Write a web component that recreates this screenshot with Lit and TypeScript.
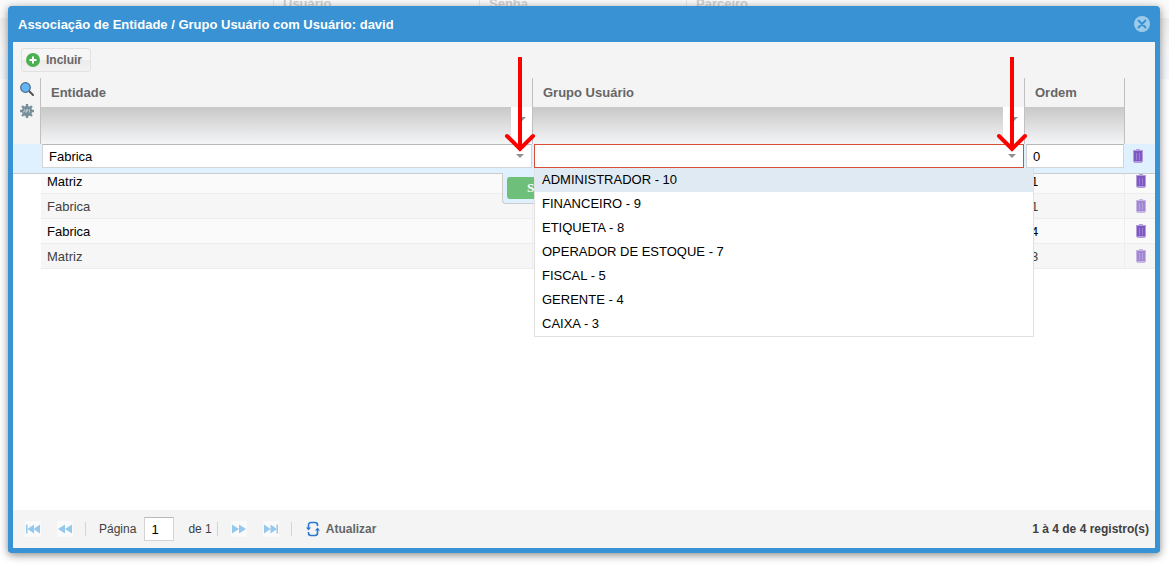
import { LitElement, html, svg, css } from "lit";
import { customElement, property, state } from "lit/decorators.js";
import { classMap } from "lit/directives/class-map.js";

interface Row {
  entity: string;
  group: string;
  order: number;
}

const ROWS: Row[] = [
  { entity: "Matriz", group: "", order: 1 },
  { entity: "Fabrica", group: "", order: 1 },
  { entity: "Fabrica", group: "", order: 4 },
  { entity: "Matriz", group: "", order: 3 },
];

const GROUPS = [
  "ADMINISTRADOR - 10",
  "FINANCEIRO - 9",
  "ETIQUETA - 8",
  "OPERADOR DE ESTOQUE - 7",
  "FISCAL - 5",
  "GERENTE - 4",
  "CAIXA - 3",
];

const trashIcon = html`<svg width="10" height="14" viewBox="0 0 10 14" aria-hidden="true">
  <path d="M3 0h4v1h3v2H0V1h3z" fill="#b39ddb" />
  <path d="M0 3h10v10H0z" fill="#b39ddb" />
  <path d="M1 2h8v10H1z" fill="#7e57c2" />
  <path d="M3.500 4v7M6.500 4v7" stroke="#9c7fd2" />
  <path d="M1 13h8v1H1z" fill="#b39ddb" />
</svg>`;

const caret = html`<svg class="caret" width="8" height="4" viewBox="0 0 8 4" aria-hidden="true">
  <path d="M0 0h8L4 4z" fill="#919191" />
</svg>`;

const arrow = html`<svg class="arrow" width="32" height="96" viewBox="0 0 32 96" aria-hidden="true">
  <path d="M16 1v92" stroke="#f00" stroke-width="4" fill="none" />
  <path d="M3 80l13 13 13-13" stroke="#f00" stroke-width="4" stroke-linecap="round" fill="none" />
</svg>`;

const pagerPaths: Record<string, unknown> = {
  first: svg`<path d="M1 3.500h1.500v9H1zM9 3.500v9L2.500 8zM15 3.500v9L8.500 8z" />`,
  prev: svg`<path d="M8 3.500v9L1 8zM15 3.500v9L8 8z" />`,
  next: svg`<path d="M1 3.500v9L8 8zM8 3.500v9L15 8z" />`,
  last: svg`<path d="M1 3.500v9L7.500 8zM7.500 3.500v9L14 8zM13.500 3.500H15v9h-1.500z" />`,
};

@customElement("grid-pager")
class GridPager extends LitElement {
  @property({ type: Number }) page = 1;
  @property({ type: Number }) pages = 1;
  @property({ type: Number }) total = 0;

  static styles = css`
    :host {
      display: flex;
      align-items: center;
      height: 38px;
      padding: 0 6px 0 12px;
      background: #f4f4f4;
      font-size: 12px;
      color: #404040;
    }
    button {
      display: flex;
      align-items: center;
      border: 0;
      padding: 0;
      background: none;
      font: inherit;
    }
    .nav {
      width: 16px;
      height: 16px;
      margin-right: 16px;
      background: #fafafa;
      fill: #94c8ec;
    }
    .near {
      margin-right: 12px;
    }
    .line {
      width: 1px;
      height: 14px;
      background: #d4d4d4;
    }
    label {
      margin: 0 8px 0 13px;
    }
    input {
      box-sizing: border-box;
      width: 30px;
      height: 24px;
      padding: 0 6px;
      border: 1px solid #d4d4d4;
      border-top-color: #b8b8b8;
      font: 13px "Liberation Sans", Arial, sans-serif;
      color: #000;
    }
    .of {
      margin: 0 5px 0 14px;
    }
    .gap {
      margin-right: 13px;
    }
    .refresh {
      gap: 6px;
      margin-left: 14px;
      font-weight: bold;
      color: #666;
    }
    .summary {
      margin-left: auto;
      font-weight: bold;
    }
  `;

  private nav(kind: string, label: string, near: boolean) {
    return html`<button class=${classMap({ nav: true, near })} aria-label=${label}>
      <svg width="16" height="16" viewBox="0 0 16 16" aria-hidden="true">${pagerPaths[kind]}</svg>
    </button>`;
  }

  render() {
    return html`
      ${this.nav("first", "Primeira página", false)} ${this.nav("prev", "Página anterior", true)}
      <span class="line"></span>
      <label for="page">Página</label>
      <input id="page" .value=${String(this.page)} />
      <span class="of">de ${this.pages}</span>
      <span class="line gap"></span>
      ${this.nav("next", "Próxima página", false)} ${this.nav("last", "Última página", true)}
      <span class="line"></span>
      <button class="refresh">
        <svg width="14" height="16" viewBox="0 0 14 16" fill="none" stroke="#2b78cc" stroke-width="1.600" aria-hidden="true">
          <path d="M2.500 7.500V4a2.500 2.500 0 0 1 2.500-2.500h4A2.500 2.500 0 0 1 11.500 4v1" />
          <path d="M11.500 8.500V12A2.500 2.500 0 0 1 9 14.500H5A2.500 2.500 0 0 1 2.500 12v-1" />
          <path d="M0 6.500h5L2.500 9.500zM9 9.500h5l-2.500-3z" fill="#2b78cc" stroke="none" />
        </svg>
        Atualizar
      </button>
      <span class="summary">1 à ${this.total} de ${this.total} registro(s)</span>
    `;
  }
}

@customElement("app-root")
class AppRoot extends LitElement {
  @state() private active = 0;

  static styles = css`
    :host {
      display: block;
      position: relative;
      min-height: 100vh;
      overflow: hidden;
      box-sizing: border-box;
      padding: 6px 9px 16px 8px;
      background: #fff;
      font: 13px "Liberation Sans", Arial, sans-serif;
      color: #000;
    }
    * {
      box-sizing: border-box;
    }
    button {
      display: flex;
      align-items: center;
      justify-content: center;
      border: 0;
      padding: 0;
      background: none;
      font: inherit;
    }
    .page {
      position: absolute;
      inset: 0;
      background: linear-gradient(#fafafa 18px, #eee 18px, #f9f9f9 55px, #f4f8fd 55px, #f4f8fd 79px, #fff 79px);
    }
    .page-heads {
      display: grid;
      grid-template-columns: 273px 206px 207px 1fr;
      height: 18px;
      font-weight: bold;
      color: #ccc;
      line-height: 8px;
    }
    .page-heads span + span {
      border-left: 1px solid #e4e4e4;
      padding-left: 9px;
    }
    .window {
      position: relative;
      display: flex;
      flex-direction: column;
      min-height: calc(100vh - 22px);
      border: 5px solid #3892d3;
      border-top: 0;
      border-radius: 4px;
      background: #3892d3;
      box-shadow: 0 2px 8px #888;
    }
    .title {
      display: flex;
      align-items: center;
      justify-content: space-between;
      height: 36px;
      padding: 0 5px;
      color: #fff;
    }
    h1 {
      margin: 0;
      font-size: 13px;
    }
    .toolbar {
      display: flex;
      align-items: center;
      height: 36px;
      padding: 0 8px;
      background: #f4f4f4;
    }
    .add {
      gap: 6px;
      height: 24px;
      padding: 0 8px 0 4px;
      border: 1px solid #e1e1e1;
      border-radius: 3px;
      background: linear-gradient(#f6f6f6 50%, #ebebeb 50%, #f3f3f3);
      font-size: 12px;
      font-weight: bold;
      color: #666;
    }
    .grid {
      position: relative;
      flex: 1;
      background: #fff;
    }
    table {
      width: 100%;
      table-layout: fixed;
      border-collapse: separate;
      border-spacing: 0;
    }
    .c-tools {
      width: 27px;
    }
    .c-order {
      width: 100px;
    }
    .c-del {
      width: 31px;
    }
    th,
    td {
      padding: 0;
      text-align: left;
      vertical-align: middle;
    }
    thead th,
    thead td {
      background: #f4f4f4;
    }
    thead .col {
      position: relative;
      height: 29px;
      padding-left: 10px;
      border-left: 1px solid #c0c0c0;
      color: #666;
    }
    thead .filter {
      height: 37px;
      border-left: 1px solid #c0c0c0;
      background: linear-gradient(#c8c8c8, #f4f5f7);
    }
    thead .end {
      border-left: 1px solid #c0c0c0;
    }
    .pick {
      width: 21px;
      height: 37px;
      margin-left: auto;
      padding-bottom: 14px;
      background: #fff;
    }
    .tools {
      vertical-align: top;
    }
    .tools button {
      width: 27px;
      height: 22px;
    }
    tbody td {
      height: 25px;
      padding-left: 6px;
      border-bottom: 1px solid #ededed;
      border-left: 1px solid #ededed;
      background: #fafafa;
    }
    tbody td:nth-child(2) {
      border-left-color: #fff;
    }
    tbody td:first-child {
      border: 0;
      background: #fff;
    }
    tbody .alt td {
      background: #f6f6f6;
      color: #404040;
    }
    tbody .alt td:first-child {
      background: #fff;
    }
    tbody .del {
      padding-left: 11px;
    }
    .alt svg {
      opacity: 0.7;
    }
    .arrow {
      position: absolute;
      z-index: 3;
      top: -22px;
      right: -4px;
      pointer-events: none;
    }
    .editor {
      position: absolute;
      z-index: 1;
      top: 66px;
      left: 0;
      right: 0;
      display: grid;
      grid-template-columns: 27px 1fr 1fr 100px 31px;
      align-items: start;
      height: 30px;
      border-bottom: 1px solid #ccc;
      background: #dff1fe;
    }
    .cell {
      position: relative;
      padding-left: 2px;
    }
    .cell .caret {
      position: absolute;
      top: 10px;
      right: 8px;
      pointer-events: none;
    }
    .field {
      display: block;
      width: 100%;
      height: 24px;
      margin: 0;
      padding: 0 6px;
      border: 1px solid #d4d4d4;
      border-top-color: #b8b8b8;
      border-radius: 0;
      outline: 0;
      appearance: none;
      background: #fff;
      font: inherit;
      color: #000;
    }
    .invalid {
      border-color: #d94e37;
    }
    .list {
      position: absolute;
      z-index: 2;
      top: 24px;
      left: 2px;
      width: calc(100% + 8px);
      margin: 0;
      padding: 0;
      border: 1px solid #e1e1e1;
      border-top: 0;
      background: #fff;
      list-style: none;
      line-height: 24px;
    }
    .list li {
      padding: 0 7px;
    }
    .list .on {
      background: #dfeaf2;
    }
    .remove {
      width: 28px;
      height: 24px;
    }
    .actions {
      position: absolute;
      top: 29px;
      right: -2px;
      width: 32px;
      overflow: hidden;
      padding: 4px;
      border: 1px solid #ccc;
      border-top: 0;
      border-right: 0;
      border-radius: 0 0 0 4px;
      background: #dff1fe;
    }
    .save {
      justify-content: flex-start;
      width: 82px;
      height: 22px;
      padding-left: 20px;
      border-radius: 3px;
      background: #6dbf79;
      font: bold 13px "Liberation Serif", serif;
      color: #fff;
    }
  `;

  render() {
    return html`
      <div class="page">
        <div class="page-heads"><span></span><span>Usuário</span><span>Senha</span><span>Parceiro</span></div>
      </div>
      <section class="window">
        <header class="title">
          <h1>Associação de Entidade / Grupo Usuário com Usuário: david</h1>
          <button aria-label="Fechar">
            <svg width="16" height="16" viewBox="0 0 16 16" aria-hidden="true">
              <circle cx="8" cy="8" r="8" fill="#9ccbea" />
              <path d="M4.500 4.500l7 7m0-7l-7 7" stroke="#3892d3" stroke-width="2" stroke-linecap="round" />
            </svg>
          </button>
        </header>
        <div class="toolbar">
          <button class="add">
            <svg width="14" height="14" viewBox="0 0 14 14" aria-hidden="true">
              <circle cx="7" cy="7" r="7" fill="#4caf50" />
              <path d="M7 3.500v7M3.500 7h7" stroke="#fff" stroke-width="2" />
            </svg>
            Incluir
          </button>
        </div>
        <div class="grid">
          <table>
            <colgroup>
              <col class="c-tools" /><col /><col /><col class="c-order" /><col class="c-del" />
            </colgroup>
            <thead>
              <tr>
                <td class="tools" rowspan="2">
                  <button aria-label="Pesquisar">
                    <svg width="14" height="14" viewBox="0 0 14 14" aria-hidden="true">
                      <path d="M9.500 9.500l3.500 3.500" stroke="#555" stroke-width="2" stroke-linecap="round" />
                      <circle cx="5.500" cy="5.500" r="4.800" fill="#64b5f6" stroke="#4c6b85" stroke-width="1.200" />
                    </svg>
                  </button>
                  <button aria-label="Configurar">
                    <svg width="14" height="14" viewBox="0 0 14 14" aria-hidden="true">
                      <path d="M7 0v14M0 7h14M2 2l10 10M12 2L2 12" stroke="#78909c" stroke-width="2.400" />
                      <circle cx="7" cy="7" r="5.200" fill="#78909c" />
                      <path d="M3.500 8.500l1-3 1 3M6.500 8.500v-3h1.500v1.500H6.500M9.500 5.500v3" fill="none" stroke="#c5d0d6" stroke-width=".8" />
                    </svg>
                  </button>
                </td>
                <th class="col">Entidade${arrow}</th>
                <th class="col">Grupo Usuário${arrow}</th>
                <th class="col">Ordem</th>
                <td class="end" rowspan="2"></td>
              </tr>
              <tr>
                <td class="filter"><button class="pick" aria-label="Filtrar entidade">${caret}</button></td>
                <td class="filter"><button class="pick" aria-label="Filtrar grupo">${caret}</button></td>
                <td class="filter"></td>
              </tr>
            </thead>
            <tbody>
              <tr><td></td><td></td><td></td><td></td><td></td></tr>
              ${ROWS.map(
                (row, i) => html`<tr class=${classMap({ alt: i % 2 === 1 })}>
                  <td></td>
                  <td>${row.entity}</td>
                  <td>${row.group}</td>
                  <td>${row.order}</td>
                  <td class="del"><button aria-label="Excluir">${trashIcon}</button></td>
                </tr>`
              )}
            </tbody>
          </table>
          <form class="editor">
            <span></span>
            <div class="cell">
              <select class="field" aria-label="Entidade">
                <option>Fabrica</option>
                <option>Matriz</option>
              </select>
              ${caret}
              <div class="actions"><button type="button" class="save">Salvar</button></div>
            </div>
            <div class="cell">
              <select class="field invalid" aria-label="Grupo Usuário">
                <option></option>
                ${GROUPS.map((g) => html`<option>${g}</option>`)}
              </select>
              ${caret}
              <ul class="list" role="listbox" aria-label="Grupos">
                ${GROUPS.map(
                  (g, i) => html`<li
                    role="option"
                    class=${classMap({ on: i === this.active })}
                    @mouseenter=${() => (this.active = i)}
                  >
                    ${g}
                  </li>`
                )}
              </ul>
            </div>
            <div class="cell"><input class="field" aria-label="Ordem" value="0" /></div>
            <button type="button" class="remove" aria-label="Excluir">${trashIcon}</button>
          </form>
        </div>
        <grid-pager page="1" pages="1" total="4"></grid-pager>
      </section>
    `;
  }
}
